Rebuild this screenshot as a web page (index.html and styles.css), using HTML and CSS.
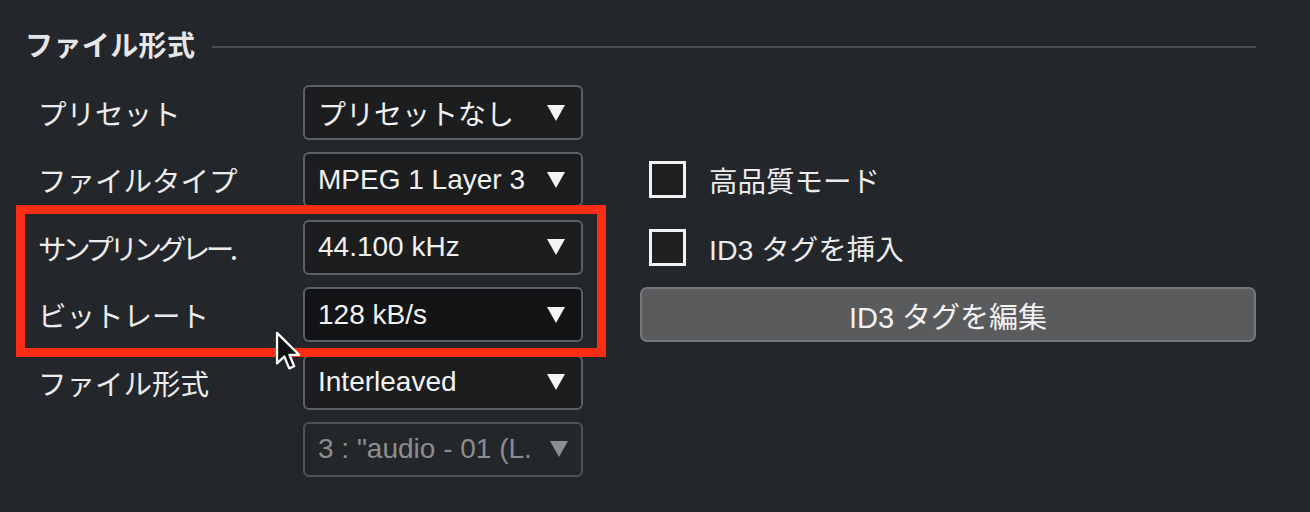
FILE: index.html
```html
<!DOCTYPE html>
<html lang="ja">
<head>
<meta charset="utf-8">
<link rel="stylesheet" href="styles.css">
</head>
<body>
<div class="panel">
  <div class="legend">
    <span class="legend-title">ファイル形式</span>
    <span class="legend-line"></span>
  </div>
  <div class="grid">
    <div class="label">プリセット</div>
    <div class="select"><span class="val">プリセットなし</span><svg class="arrow" viewBox="0 0 18 16"><polygon points="0,0 18,0 9,16"/></svg></div>
    <div></div>

    <div class="label">ファイルタイプ</div>
    <div class="select"><span class="val">MPEG 1 Layer 3</span><svg class="arrow" viewBox="0 0 18 16"><polygon points="0,0 18,0 9,16"/></svg></div>
    <label class="check"><span class="box"></span><span>高品質モード</span></label>

    <div class="label squeeze">サンプリングレー.</div>
    <div class="select"><span class="val">44.100 kHz</span><svg class="arrow" viewBox="0 0 18 16"><polygon points="0,0 18,0 9,16"/></svg></div>
    <label class="check"><span class="box"></span><span>ID3 タグを挿入</span></label>

    <div class="label">ビットレート</div>
    <div class="select dark"><span class="val">128 kB/s</span><svg class="arrow" viewBox="0 0 18 16"><polygon points="0,0 18,0 9,16"/></svg></div>
    <div class="button">ID3 タグを編集</div>

    <div class="label">ファイル形式</div>
    <div class="select"><span class="val">Interleaved</span><svg class="arrow" viewBox="0 0 18 16"><polygon points="0,0 18,0 9,16"/></svg></div>
    <div></div>

    <div></div>
    <div class="select disabled"><span class="val">3 : "audio - 01 (L.</span><svg class="arrow" viewBox="0 0 18 16"><polygon points="0,0 18,0 9,16"/></svg></div>
    <div></div>
  </div>

  <div class="highlight"></div>
  <svg class="cursor" viewBox="0 0 13 21"><path d="M1 1 L1 17 L4.8 13.4 L7.4 19.6 L10 18.5 L7.5 12.5 L12.6 12.5 Z" fill="#111" stroke="#fff" stroke-width="1.2" stroke-linejoin="round"/></svg>
</div>
</body>
</html>
```

FILE: styles.css
```css
html, body {
  margin: 0;
  padding: 0;
  background: #23272b;
}
body {
  width: 1310px;
  height: 512px;
  overflow: hidden;
  font-family: "Liberation Sans", "Noto Sans CJK JP", sans-serif;
  color: #ececec;
}
.panel {
  position: relative;
  padding: 24px 54px 0 25px;
}
.legend {
  display: flex;
  align-items: center;
  gap: 17px;
  height: 40px;
}
.legend-title {
  font-family: "Noto Sans CJK JP", sans-serif;
  font-weight: 700;
  font-size: 28px;
  letter-spacing: 0.4px;
  color: #e6e6e6;
}
.legend-line {
  flex: 1;
  height: 2px;
  background: #4b4f53;
  margin-top: 5px;
}
.grid {
  margin-top: 21px;
  padding-left: 13px;
  display: grid;
  grid-template-columns: 265px 280px 1fr;
  column-gap: 0;
  grid-auto-rows: 55px;
  row-gap: 12.4px;
}
.grid > :nth-child(3n) {
  margin-left: 57px;
}
.label {
  display: flex;
  align-items: center;
  font-family: "Noto Sans CJK JP", sans-serif;
  font-size: 28.5px;
  color: #ececec;
  white-space: nowrap;
}
.label.squeeze {
  letter-spacing: -4.4px;
}
.select {
  display: flex;
  align-items: center;
  justify-content: space-between;
  box-sizing: border-box;
  height: 55px;
  padding: 0 16px 0 13px;
  background: #1c1d1f;
  border: 2px solid #5c5f63;
  border-radius: 6px;
  font-size: 28px;
  color: #f2f2f2;
  white-space: nowrap;
}
.select.dark {
  background: #121416;
}
.select.disabled {
  background: #24272a;
  border-color: #4e5155;
  color: #8c8d8f;
  padding-right: 13px;
}
.val {
  overflow: hidden;
}
.arrow {
  width: 18px;
  height: 16px;
  flex: none;
  fill: #f4f4f4;
}
.select.disabled .arrow {
  fill: #8c8d8f;
}
.check {
  display: flex;
  align-items: center;
  gap: 23px;
  font-size: 28.5px;
  color: #ececec;
  padding-left: 9px;
}
.box {
  box-sizing: border-box;
  width: 37px;
  height: 37px;
  border: 3px solid #f2f2f2;
  background: #1f2022;
}
.button {
  display: flex;
  align-items: center;
  justify-content: center;
  box-sizing: border-box;
  height: 55px;
  background: #5a5b5d;
  border: 2px solid #76787b;
  border-radius: 7px;
  font-size: 29px;
  color: #f2f2f2;
}
.highlight {
  position: absolute;
  left: 16px;
  top: 205px;
  width: 590px;
  height: 152px;
  box-sizing: border-box;
  border: 9px solid #fb2d15;
}
.cursor {
  position: absolute;
  left: 275px;
  top: 331px;
  width: 25px;
  height: 40px;
}
```
